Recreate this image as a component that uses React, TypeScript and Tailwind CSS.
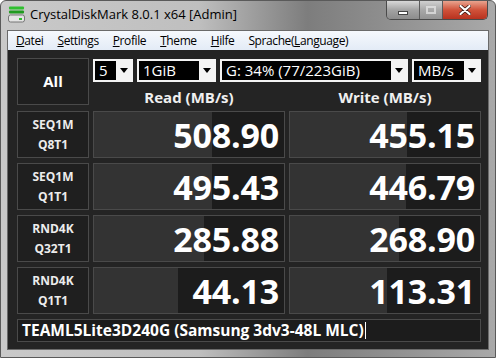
import React from "react";

const rows = [
  { a: "SEQ1M", b: "Q8T1", read: "508.90", write: "455.15", rw: 118, ww: 117 },
  { a: "SEQ1M", b: "Q1T1", read: "495.43", write: "446.79", rw: 118, ww: 116 },
  { a: "RND4K", b: "Q32T1", read: "285.88", write: "268.90", rw: 110, ww: 109 },
  { a: "RND4K", b: "Q1T1", read: "44.13", write: "113.31", rw: 84, ww: 97 },
];

const ui = { fontFamily: '"Open Sans", "Noto Sans", sans-serif' };

function Combo({ text, w }: { text: string; w: string }) {
  return (
    <div className={`${w} h-[23px] flex border-2 border-[#f4f4f4] bg-[#f4f4f4]`}>
      <div className="flex-1 flex items-center bg-black text-white text-[15px] leading-[17px] pl-[4px] whitespace-nowrap">
        {text}
      </div>
      <div className="w-[15px] flex items-center justify-center">
        <svg width="8" height="5" viewBox="0 0 8 5">
          <path d="M0 0h8L4 5z" fill="#000" />
        </svg>
      </div>
    </div>
  );
}

function Bar({ value, fill }: { value: string; fill: number }) {
  return (
    <div className="relative h-[47px] border border-[#4a4a4a] bg-[#1c1c1c] overflow-hidden">
      <div className="absolute left-0 top-0 bottom-0 bg-[#333333]" style={{ width: fill }} />
      <div className="relative h-full flex items-center justify-end pr-[5px] text-white font-bold text-[34px] leading-none tracking-[-0.2px]">
        {value}
      </div>
    </div>
  );
}

function DriveIcon() {
  return (
    <svg width="17" height="17" viewBox="0 0 17 17">
      <rect x="1" y="0.5" width="15" height="3" rx="1" fill="#2fbf2f" />
      <rect x="1" y="4.5" width="15" height="3" rx="1" fill="#1f9a1f" />
      <rect x="0.5" y="9" width="16" height="7" rx="2" fill="#e4e4e4" stroke="#777" />
      <rect x="11" y="12" width="3" height="2" fill="#2fbf2f" />
    </svg>
  );
}

export default function App() {
  return (
    <div
      className="w-[496px] h-[358px] flex flex-col bg-[linear-gradient(90deg,#c9c9c9_0%,#bfbfbf_40%,#7d7d7d_62%,#8f8f8f_78%,#a9a9a9_100%)] border border-[#5a5a5a] rounded-t-[6px] overflow-hidden"
      style={ui}
    >
      <div className="h-[29px] shrink-0 flex items-start relative">
        <div className="pl-[7px] pt-[5px]">
          <DriveIcon />
        </div>
        <div className="pl-[5px] pt-[4px] text-[13px] leading-[18px] text-black">
          CrystalDiskMark 8.0.1 x64 [Admin]
        </div>
        <div className="ml-auto mr-[7px] flex h-[19px] rounded-b-[5px] border border-t-0 border-[#4a4a4a] overflow-hidden">
          <div className="w-[33px] flex items-center justify-center bg-[linear-gradient(180deg,#d8d8d8,#a3a3a3_50%,#8c8c8c)] border-r border-[#5c5c5c]">
            <div className="w-[10px] h-[4px] bg-white border border-[#444] mt-[5px]" />
          </div>
          <div className="w-[23px] flex items-center justify-center bg-[linear-gradient(180deg,#d0d0d0,#a8a8a8_50%,#939393)] border-r border-[#5c5c5c]">
            <div className="w-[10px] h-[8px] border-2 border-[#e8e8e8] opacity-70" />
          </div>
          <div className="w-[44px] flex items-center justify-center bg-[linear-gradient(180deg,#e9a48f,#d0523a_50%,#b8321f)]">
            <svg width="12" height="10" viewBox="0 0 12 10">
              <path d="M1.5 1l9 8M10.5 1l-9 8" stroke="#3a1a14" strokeWidth="3.6" strokeLinecap="round" />
              <path d="M1.5 1l9 8M10.5 1l-9 8" stroke="#fff" strokeWidth="2.2" strokeLinecap="round" />
            </svg>
          </div>
        </div>
      </div>

      <div className="mx-[6px] flex-1 flex flex-col border border-[#6a6a6a]">
        <div className="h-[19px] shrink-0 flex items-center gap-[14px] pl-[8px] bg-[linear-gradient(180deg,#f6f9fd,#e3ebf6)] text-[12px] tracking-[-0.4px] text-black">
          <span><u>D</u>atei</span>
          <span><u>S</u>ettings</span>
          <span><u>P</u>rofile</span>
          <span><u>T</u>heme</span>
          <span><u>H</u>ilfe</span>
          <span>Sprache(<u>L</u>anguage)</span>
        </div>

        <div className="flex-1 bg-[#242424] pt-[8px] pl-[9px] pr-[7px]">
          <div className="grid grid-cols-[72px_192px_192px] gap-x-[4px] gap-y-[5px]">
            <div className="h-[47px] border border-[#4a4a4a] bg-[#1f1f1f] flex items-center justify-center text-white font-bold text-[15px]">
              All
            </div>
            <div className="col-span-2 flex flex-col">
              <div className="flex gap-[4px] pt-[1px]">
                <Combo text="5" w="w-[40px]" />
                <Combo text="1GiB" w="w-[79px]" />
                <Combo text="G: 34% (77/223GiB)" w="w-[188px]" />
                <Combo text="MB/s" w="w-[69px]" />
              </div>
              <div className="grid grid-cols-2 gap-x-[4px] pt-[6px] text-[#f0f0f0] font-bold text-[15px] leading-[18px] text-center">
                <div>Read (MB/s)</div>
                <div>Write (MB/s)</div>
              </div>
            </div>

            {rows.map((r, i) => (
              <React.Fragment key={i}>
                <div className="h-[47px] border border-[#4a4a4a] bg-[#1f1f1f] flex flex-col items-center justify-center text-[#ececec] font-bold text-[12px] leading-[20px]">
                  <div>{r.a}</div>
                  <div>{r.b}</div>
                </div>
                <Bar value={r.read} fill={r.rw} />
                <Bar value={r.write} fill={r.ww} />
              </React.Fragment>
            ))}

            <div className="col-span-3 h-[23px] border border-[#4a4a4a] bg-[#1c1c1c] flex items-center pl-[4px] text-white font-bold text-[15.5px] leading-none whitespace-nowrap">
              TEAML5Lite3D240G (Samsung 3dv3-48L MLC)
              <span className="ml-[1px] w-[1px] h-[17px] bg-white" />
            </div>
          </div>
        </div>
      </div>
      <div className="h-[7px] shrink-0" />
    </div>
  );
}
